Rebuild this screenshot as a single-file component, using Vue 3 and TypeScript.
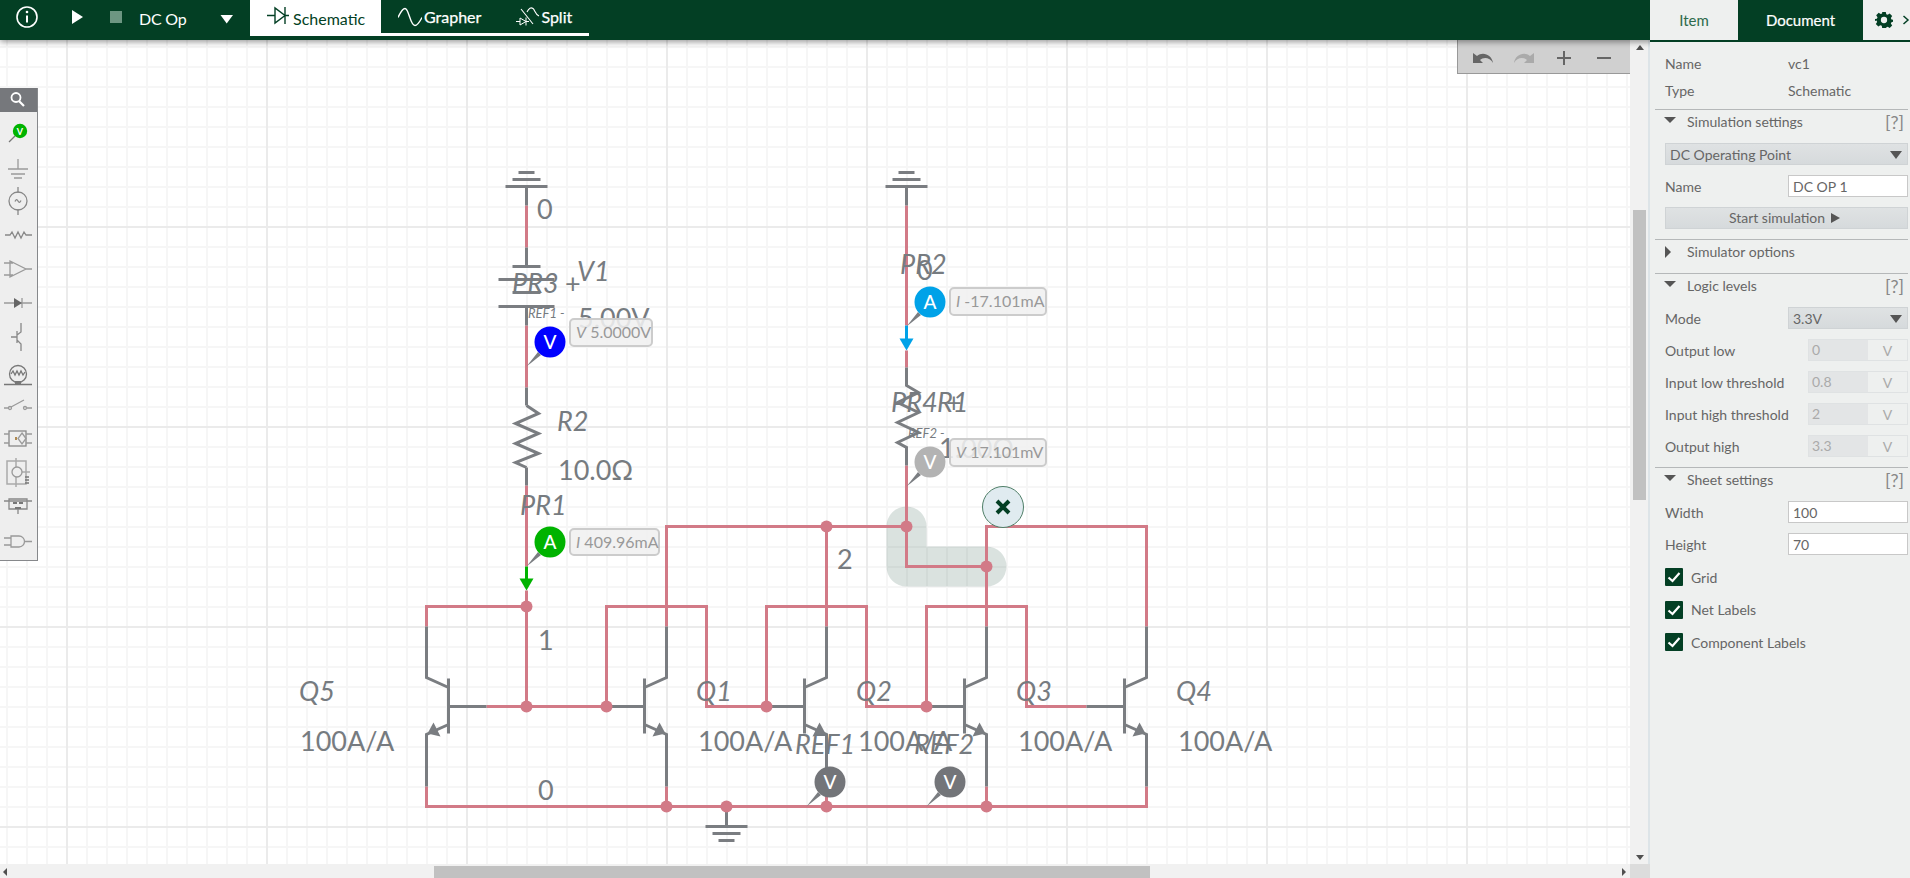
<script setup lang="ts">
const RED = '#d27a87'
const GRAY = '#7a7d81'

const redWires: string[] = [
  'M526 205V247', 'M526 325V387', 'M526 485V566', 'M526 590V706',
  'M906 205V325', 'M906 350V367', 'M906 465V566H986',
  'M906 526H666V626', 'M826 526V626', 'M986 626V526H1146V626',
  'M526 606H426V626', 'M486 706H606', 'M606 706V606H706V706H766',
  'M766 706V606H866V706H926', 'M926 706V606H1026V706H1086',
  'M426 786V806H1146V786', 'M666 786V806', 'M826 786V806', 'M986 786V806'
]
const grayWires: string[] = [
  'M526 186V205', 'M526 247V266', 'M526 306V325', 'M526 387V405', 'M526 467V485',
  'M505 186H547', 'M512 179H540', 'M518 172H534',
  'M512 266H540', 'M498 279H554', 'M512 292H540', 'M498 306H554',
  'M526 405L538 413L515 423L538 433L515 443L538 453L515 462L526 467',
  'M906 186V205', 'M885 186H927', 'M892 179H920', 'M898 172H914',
  'M906 367V385L918 392L897 402L918 412L897 422L918 432L897 442L906 447V465',
  'M726 806V826', 'M705 826H747', 'M712 833H740', 'M718 840H734'
]
const junctions: [number, number][] = [
  [526, 606], [526, 706], [606, 706], [766, 706], [926, 706], [826, 526], [906, 526],
  [986, 566], [666, 806], [726, 806], [826, 806], [986, 806]
]

interface Transistor { cx: number; bx: number; from: number }
const transistors: Transistor[] = [
  { cx: 426, bx: 448, from: 486 },
  { cx: 666, bx: 644, from: 606 },
  { cx: 826, bx: 804, from: 766 },
  { cx: 986, bx: 964, from: 926 },
  { cx: 1146, bx: 1124, from: 1086 }
]
function transistorPath(t: Transistor): string {
  return `M${t.cx} 626V677L${t.bx} 687M${t.bx} 678V733M${t.from} 706H${t.bx}M${t.bx} 724L${t.cx} 734V786`
}
function arrowPoints(t: Transistor): string {
  const s = t.cx > t.bx ? 1 : -1
  return `${t.bx + 8 * s},736 ${t.bx + 15 * s},722 ${t.bx + 21 * s},733`
}

interface Label { x: number; y: number; t: string; i?: boolean }
const labels: Label[] = [
  { x: 537, y: 219, t: '0' },
  { x: 577, y: 281, t: 'V1', i: true },
  { x: 512, y: 293, t: 'PR3', i: true },
  { x: 565, y: 293, t: '+' },
  { x: 578, y: 328, t: '5.00V' },
  { x: 557, y: 431, t: 'R2', i: true },
  { x: 558, y: 480, t: '10.0Ω' },
  { x: 520, y: 515, t: 'PR1', i: true },
  { x: 538, y: 650, t: '1' },
  { x: 538, y: 800, t: '0' },
  { x: 837, y: 569, t: '2' },
  { x: 900, y: 274, t: 'PR2', i: true },
  { x: 917, y: 280, t: '0' },
  { x: 891, y: 412, t: 'PR4', i: true },
  { x: 946, y: 412, t: '+' },
  { x: 937, y: 412, t: 'R1', i: true },
  { x: 939, y: 458, t: '1.00Ω' },
  { x: 299, y: 701, t: 'Q5', i: true },
  { x: 300, y: 751, t: '100A/A' },
  { x: 696, y: 701, t: 'Q1', i: true },
  { x: 698, y: 751, t: '100A/A' },
  { x: 856, y: 701, t: 'Q2', i: true },
  { x: 858, y: 751, t: '100A/A' },
  { x: 1016, y: 701, t: 'Q3', i: true },
  { x: 1018, y: 751, t: '100A/A' },
  { x: 1176, y: 701, t: 'Q4', i: true },
  { x: 1178, y: 751, t: '100A/A' },
  { x: 795, y: 754, t: 'REF1', i: true },
  { x: 914, y: 754, t: 'REF2', i: true }
]

interface Probe { x: number; y: number; c: string; t: string }
const probes: Probe[] = [
  { x: 550, y: 342, c: '#0000ff', t: 'V' },
  { x: 550, y: 542, c: '#00b300', t: 'A' },
  { x: 930, y: 302, c: '#00a2e8', t: 'A' },
  { x: 930, y: 462, c: '#b3b3b3', t: 'V' },
  { x: 830, y: 782, c: '#737579', t: 'V' },
  { x: 950, y: 782, c: '#737579', t: 'V' }
]
interface Tip { x: number; y: number; w: number; h: number; k: string; v: string }
const tips: Tip[] = [
  { x: 570, y: 319, w: 82, h: 27, k: 'V', v: '5.0000V' },
  { x: 570, y: 529, w: 89, h: 26, k: 'I', v: '409.96mA' },
  { x: 950, y: 288, w: 96, h: 27, k: 'I', v: '-17.101mA' },
  { x: 950, y: 439, w: 96, h: 27, k: 'V', v: '17.101mV' }
]
const logicRows = [
  { label: 'Output low', value: '0' },
  { label: 'Input low threshold', value: '0.8' },
  { label: 'Input high threshold', value: '2' },
  { label: 'Output high', value: '3.3' }
]
const checks = ['Grid', 'Net Labels', 'Component Labels']
</script>

<template>
  <div class="app">
    <header class="topbar">
      <svg class="tb-icon" width="250" height="40" viewBox="0 0 250 40">
        <circle cx="27" cy="17" r="10" fill="none" stroke="#fff" stroke-width="1.6" />
        <circle cx="27" cy="12" r="1.3" fill="#fff" />
        <path d="M27 15.5V22.5" stroke="#fff" stroke-width="2" />
        <path d="M72 10L83 17L72 24Z" fill="#fff" />
        <rect x="110" y="11" width="12" height="12" fill="#6d9682" />
        <path d="M220.5 15H233L226.7 23.5Z" fill="#fff" />
      </svg>
      <span class="sim-mode">DC Op</span>
      <nav class="tabs">
        <div class="tab active">
          <svg class="raise" width="24" height="20" viewBox="0 0 24 20">
            <path d="M0 9.5H8M8 2V17L18 9.5ZM18 1V18M18 9.5H22" fill="none" stroke="#033f24" stroke-width="1.4" />
          </svg>
          <span>Schematic</span>
        </div>
        <div class="rest">
          <div class="tab">
            <svg width="24" height="20" viewBox="0 0 24 20">
              <path d="M0 10.5C3 4 5 1.500 7 1.500C11 1.500 12 18.500 17 18.500C20 18.500 22 14 24 10.500" fill="none" stroke="#fff" stroke-width="1.4" />
            </svg>
            <span>Grapher</span>
          </div>
          <div class="tab split">
            <svg width="25" height="22" viewBox="0 0 25 22">
              <path d="M1 15.500H5M5 12V19L11 15.500ZM11 11.500V19.500M11 15.500H14" fill="none" stroke="#fff" stroke-width="1" />
              <path d="M6 3L18 18" fill="none" stroke="#fff" stroke-width="1.100" />
              <path d="M12 6C14 2 16 1 18 2.500S20 8 24 10" fill="none" stroke="#fff" stroke-width="1.100" />
            </svg>
            <span>Split</span>
          </div>
        </div>
      </nav>
    </header>

    <div class="body">
      <main class="canvas">
        <svg class="circuit" width="1632" height="824" viewBox="0 40 1632 824">
          <g transform="translate(.5 .5)">
            <path d="M906 526V566H986" fill="none" stroke="#043f25" stroke-opacity=".15" stroke-width="40" stroke-linecap="round" stroke-linejoin="round" />
            <g fill="none" stroke-width="3">
              <path v-for="d in redWires" :key="d" :d="d" :stroke="RED" />
              <path v-for="d in grayWires" :key="d" :d="d" :stroke="GRAY" />
              <path v-for="t in transistors" :key="t.cx" :d="transistorPath(t)" :stroke="GRAY" />
              <path d="M526 566V580" stroke="#00b300" />
              <path d="M906 325V339" stroke="#00a2e8" />
            </g>
            <polygon v-for="t in transistors" :key="t.bx" :points="arrowPoints(t)" :fill="GRAY" />
            <path d="M519 578H533L526 590Z" fill="#00b300" />
            <path d="M899 338H913L906 350Z" fill="#00a2e8" />
            <circle v-for="j in junctions" :key="j.join()" :cx="j[0]" :cy="j[1]" r="6" :fill="RED" />
          </g>
          <g class="lbl">
            <text v-for="l in labels" :key="l.t + l.x + l.y" :x="l.x" :y="l.y" :class="{ it: l.i }">{{ l.t }}</text>
            <text class="small" x="528" y="318">REF1 -</text>
            <text class="small" x="908" y="438">REF2 -</text>
          </g>
          <g v-for="p in probes" :key="p.x + '-' + p.y">
            <path :d="`M${p.x - 23.5} ${p.y + 24.5}L${p.x - 12} ${p.y + 10}L${p.x - 9} ${p.y + 13}Z`" :fill="GRAY" />
            <circle :cx="p.x" :cy="p.y" r="15.5" :fill="p.c" />
            <text class="probe" :x="p.x" :y="p.y + 6.5">{{ p.t }}</text>
          </g>
          <g v-for="t in tips" :key="t.x + '-' + t.y">
            <rect :x="t.x" :y="t.y" :width="t.w" :height="t.h" rx="4" fill="#f0f0f0" fill-opacity=".88" stroke="#cccccc" stroke-width="2" />
            <text class="tip" :x="t.x + 6" :y="t.y + 19"><tspan font-style="italic">{{ t.k }}</tspan> {{ t.v }}</text>
          </g>
          <circle cx="1003" cy="507" r="20.5" fill="#e0ebf0" stroke="#4f7f68" />
          <path d="M997 501L1009 513M1009 501L997 513" stroke="#033f24" stroke-width="4" />
        </svg>

        <aside class="palette">
          <div class="search">
            <svg width="37" height="24" viewBox="0 0 37 24">
              <circle cx="16" cy="9.5" r="4.5" fill="none" stroke="#fff" stroke-width="1.8" />
              <path d="M19 13L24 18" stroke="#fff" stroke-width="2.2" />
            </svg>
          </div>
          <svg width="37" height="448" viewBox="0 112 37 448">
            <path d="M9 142L15 136" stroke="#777" stroke-width="1.3" />
            <circle cx="20" cy="131" r="7.2" fill="#00b300" />
            <text class="pv" x="20" y="134.5">V</text>
            <g fill="none" stroke="#9a9a9a" stroke-width="1.3">
              <path d="M18 159V169M8 169H28M11 174H25M14 178H22" />
              <circle cx="18" cy="201" r="9" stroke="#888" />
              <path d="M18 187V193M18 209V215M15 201.5Q16.5 198 18 201T21 200.5" stroke="#888" />
              <path d="M5 235H10L12 232L15 238L18 232L21 238L24 232L26 235H32" stroke="#888" />
              <path d="M10 261V277L26 269ZM26 269H32M4 263H13M4 275H13" />
              <path d="M4 303H32M22 298V308" />
              <path d="M21 323V332L17 335M17 331V343M11 337H17M17 340L21 344V351" stroke="#888" />
              <circle cx="18" cy="374" r="8.5" stroke="#777" />
              <path d="M4 384.5H32M11 374L13 371L15 375L17 371L19 375L21 371L23 375L25 372" stroke="#777" />
              <path d="M4 408H9M11 407L24 400M27 408H32" />
              <circle cx="10" cy="408" r="1.5" />
              <circle cx="25" cy="408" r="1.5" />
              <rect x="9" y="431" width="17" height="15" stroke="#888" />
              <path d="M4 434H9M26 434H32M4 443H9M26 443H32M22 433L26 438.5L22 444L18 438.5Z" />
              <path d="M7 461H26V484H7ZM16 458V467M16 477V487M22 472H30" stroke="#aaa" stroke-width="1.5" />
              <circle cx="17" cy="472" r="5" stroke="#999" />
              <path d="M25 477H29M25 480H29M25 483H29" stroke="#777" />
              <path d="M4 501H32M9 499H27V509H9ZM18 509V514" stroke="#888" />
              <path d="M11 536H19A5.5 5.5 0 0 1 19 547H11ZM4 538H11M4 545H11M25 541.5H32" stroke="#999" />
            </g>
            <path d="M14 298V308L22 303Z" fill="#666" />
            <path d="M15 381H21V384H15ZM15 507H21V509H15ZM13 502H17V504H13ZM19 502H23V504H19Z" fill="#777" />
            <rect x="15" y="437" width="2" height="3" fill="#b08a50" />
          </svg>
        </aside>

        <div class="tools">
          <svg width="174" height="34" viewBox="0 0 174 34">
            <path d="M16 13V23H26L23 20C26 17 33 17 36 23C35 15 26 11 20 16Z" fill="#666" />
            <path d="M77 13V23H67L70 20C67 17 60 17 57 23C58 15 67 11 73 16Z" fill="#aaa" />
            <path d="M100 18H114M107 11V25" stroke="#666" stroke-width="2" />
            <path d="M140 18H154" stroke="#666" stroke-width="2" />
          </svg>
        </div>

        <div class="vscroll">
          <span class="arrow up"></span>
          <span class="vthumb"></span>
          <span class="arrow down"></span>
        </div>
        <div class="hscroll">
          <span class="harrow left"></span>
          <span class="hthumb"></span>
          <span class="harrow right"></span>
        </div>
      </main>

      <aside class="panel">
        <div class="ptabs">
          <div class="ptab item">Item</div>
          <div class="ptab doc">Document</div>
          <div class="ptab gear">
            <svg width="18" height="18" viewBox="0 0 20 20">
              <path fill="#033f24" fill-rule="evenodd" d="M8 1h4l.5 2.6 1.6.7 2.2-1.500 2.800 2.800-1.500 2.200.7 1.600 2.100.500v2l-2.100.5-.7 1.600 1.500 2.200-2.800 2.800-2.200-1.500-1.600.7L12 19H8l-.5-2.600-1.600-.7-2.200 1.500-2.800-2.800 1.500-2.200-.7-1.600L0 11V9l2.100-.5.7-1.600-1.500-2.200 2.800-2.800 2.200 1.500 1.600-.7ZM10 6.500a3.500 3.500 0 1 0 0 7 3.500 3.500 0 0 0 0-7Z" />
            </svg>
            <svg class="chev" width="8" height="12" viewBox="0 0 8 12">
              <path d="M1.500 2L6 6L1.500 10" fill="none" stroke="#033f24" stroke-width="1.500" />
            </svg>
          </div>
        </div>

        <div class="pbody">
          <div class="info"><span class="lab">Name</span><span>vc1</span></div>
          <div class="info"><span class="lab">Type</span><span>Schematic</span></div>

          <section class="sec first">
            <div class="sec-h"><i class="tri-d"></i><span>Simulation settings</span><b>[?]</b></div>
            <div class="select full">DC Operating Point<i class="sel-a"></i></div>
            <div class="row"><span class="lab">Name</span><div class="input">DC OP 1</div></div>
            <div class="btn">Start simulation<i class="play"></i></div>
          </section>

          <section class="sec options">
            <div class="sec-h"><i class="tri-r"></i><span>Simulator options</span></div>
          </section>

          <section class="sec logic">
            <div class="sec-h"><i class="tri-d"></i><span>Logic levels</span><b>[?]</b></div>
            <div class="row lead"><span class="lab">Mode</span><div class="select half">3.3V<i class="sel-a"></i></div></div>
            <div v-for="r in logicRows" :key="r.label" class="row">
              <span class="lab">{{ r.label }}</span>
              <div class="unit"><span class="uval">{{ r.value }}</span><span class="uv">V</span></div>
            </div>
          </section>

          <section class="sec sheet">
            <div class="sec-h"><i class="tri-d"></i><span>Sheet settings</span><b>[?]</b></div>
            <div class="row lead"><span class="lab">Width</span><div class="input">100</div></div>
            <div class="row"><span class="lab">Height</span><div class="input">70</div></div>
            <label v-for="(c, i) in checks" :key="c" class="check" :class="{ firstcheck: i === 0 }">
              <span class="box">
                <svg width="18" height="18" viewBox="0 0 18 18"><path d="M3.500 9.500L7.500 13L14.500 5" fill="none" stroke="#fff" stroke-width="2.200" /></svg>
              </span>
              {{ c }}
            </label>
          </section>
        </div>
      </aside>
    </div>
  </div>
</template>

<style>
html, body { margin: 0; height: 100%; overflow: hidden; }
</style>

<style scoped>
.app {
  width: 1910px;
  height: 878px;
  display: flex;
  flex-direction: column;
  font-family: Lato, "Noto Sans", sans-serif;
  overflow: hidden;
  background: #fff;
}
.topbar {
  position: relative;
  z-index: 3;
  height: 40px;
  flex: none;
  display: flex;
  background: #033f24;
  box-shadow: 0 2px 6px rgba(0, 0, 0, .4);
  color: #fff;
}
.tb-icon { flex: none; }
.sim-mode {
  position: absolute;
  left: 139px;
  top: 9px;
  font-size: 16px;
  line-height: 19px;
  letter-spacing: -.2px;
}
.tabs { display: flex; height: 36px; }
.tab {
  display: flex;
  align-items: center;
  font-size: 16px;
  gap: 2px;
  height: 33px;
}
.rest .tab span { -webkit-text-stroke: .25px #fff; }
.raise { margin-top: -4px; }
.tab.active {
  width: 131px;
  height: 36px;
  box-sizing: border-box;
  padding-left: 17px;
  background: #fff;
  color: #033f24;
}
.rest {
  display: flex;
  width: 208px;
  padding-left: 17px;
  box-sizing: border-box;
  height: 36px;
  border-bottom: 3px solid #fff;
}
.tab.split { margin-left: 34px; gap: 1px; }

.body { flex: 1; display: flex; min-height: 0; }
.canvas {
  position: relative;
  width: 1650px;
  flex: none;
  overflow: hidden;
  background-color: #fff;
  background-image:
    linear-gradient(90deg, #ebebeb 2px, transparent 2px),
    linear-gradient(#ebebeb 2px, transparent 2px),
    linear-gradient(90deg, #f6f6f6 2px, transparent 2px),
    linear-gradient(#f6f6f6 2px, transparent 2px);
  background-size: 200px 200px, 200px 200px, 20px 20px, 20px 20px;
  background-position: 66px 186px, 66px 186px, 6px 6px, 6px 6px;
}
.circuit { position: absolute; left: 0; top: 0; }
.lbl text {
  font-size: 27px;
  fill: #767b80;
}
.lbl text.it { font-style: italic; }
.lbl text.small { font-size: 13px; font-style: italic; }
.probe {
  font-size: 19px;
  font-weight: 500;
  fill: #fff;
  text-anchor: middle;
}
.tip { font-size: 16px; fill: #999; }
.pv { font-size: 9px; font-weight: 700; fill: #fff; text-anchor: middle; }

.palette {
  position: absolute;
  left: 0;
  top: 48px;
  width: 37px;
  height: 472px;
  background: #eeeeee;
  border-right: 1px solid #86888b;
  border-bottom: 1px solid #86888b;
}
.search { height: 24px; background: #76787c; }
.search svg, .palette svg { display: block; }
.tools {
  position: absolute;
  left: 1457px;
  top: 0;
  width: 172px;
  height: 33px;
  background: #d0d0d0;
  border: 1px solid #999;
  border-top: 0;
}
.tools svg { display: block; margin-left: -1px; }
.vscroll {
  position: absolute;
  right: 0;
  top: 0;
  bottom: 14px;
  width: 20px;
  box-sizing: border-box;
  background: #f1f1f1;
  border-right: 2px solid #dde4e8;
}
.vthumb {
  position: absolute;
  left: 3px;
  top: 170px;
  width: 13px;
  height: 290px;
  background: #c1c1c1;
}
.arrow { position: absolute; left: 6px; width: 0; height: 0; border: 4px solid transparent; }
.arrow.up { top: 5px; border-bottom: 5px solid #505050; border-top: 0; }
.arrow.down { bottom: 4px; border-top: 5px solid #505050; border-bottom: 0; }
.hscroll {
  position: absolute;
  left: 0;
  bottom: 0;
  width: 1650px;
  height: 14px;
  background: #f1f1f1;
  box-shadow: inset -20px 0 0 #dcdcdc;
}
.hthumb {
  position: absolute;
  left: 434px;
  top: 2px;
  width: 716px;
  height: 12px;
  background: #c1c1c1;
}
.harrow { position: absolute; top: 4px; width: 0; height: 0; border: 4px solid transparent; }
.harrow.left { left: 3px; border-right: 4px solid #505050; border-left: 0; }
.harrow.right { left: 1622px; border-left: 4px solid #505050; border-right: 0; }

.panel {
  position: relative;
  z-index: 4;
  margin-top: -40px;
  width: 260px;
  flex: none;
  background: #eef0ef;
  font-size: 14px;
  color: #666;
}
.ptabs {
  display: flex;
  height: 40px;
  border-bottom: 2px solid #033f24;
}
.ptab { display: flex; align-items: center; justify-content: center; font-size: 15px; }
.ptab.item { width: 88px; color: #2d6a4c; }
.ptab.doc { width: 125px; background: #033f24; color: #fff; -webkit-text-stroke: .2px #fff; }
.ptab.gear { width: 47px; justify-content: flex-start; padding-left: 12px; box-sizing: border-box; gap: 9px; }
.chev { flex: none; }
.pbody { padding: 8px 2px 0 15px; }
.info { display: flex; height: 27px; align-items: center; }
.lab { width: 123px; flex: none; white-space: nowrap; }
.sec { margin-left: -10px; border-top: 1px solid #b5b8b9; padding-left: 10px; }
.sec.first { margin-top: 5px; height: 129px; }
.sec.options { height: 33px; }
.sec.logic { height: 193px; }
.sec-h {
  height: 24px;
  box-sizing: border-box;
  padding-bottom: 1px;
  display: flex;
  align-items: center;
  position: relative;
  padding-left: 22px;
}
.sec-h b { position: absolute; right: 4px; top: 1px; font-weight: 400; font-size: 18px; color: #888; }
.tri-d {
  position: absolute; left: -1px; top: 7px;
  width: 0; height: 0;
  border-left: 6px solid transparent; border-right: 6px solid transparent;
  border-top: 6px solid #555;
}
.tri-r {
  position: absolute; left: 0; top: 6px;
  width: 0; height: 0;
  border-top: 6px solid transparent; border-bottom: 6px solid transparent;
  border-left: 6px solid #555;
}
.select, .btn {
  position: relative;
  box-sizing: border-box;
  height: 22px;
  border: 1px solid #cfd3d5;
  background: linear-gradient(#dfe2e3, #d6dadc);
  display: flex;
  align-items: center;
  padding-left: 4px;
}
.select.full { margin-top: 9px; }
.select.half { width: 120px; }
.sel-a {
  position: absolute; right: 5px; top: 7px;
  width: 0; height: 0;
  border-left: 6px solid transparent; border-right: 6px solid transparent;
  border-top: 8px solid #555;
}
.row { display: flex; align-items: center; height: 22px; margin-top: 10px; }
.row.lead { margin-top: 9px; }
.input {
  box-sizing: border-box;
  width: 120px;
  height: 22px;
  background: #fff;
  border: 1px solid #c8c8c8;
  padding-left: 4px;
  line-height: 21px;
}
.btn { margin-top: 10px; justify-content: center; padding: 0 4px 1px 0; gap: 6px; }
.play {
  width: 0; height: 0;
  border-top: 5.5px solid transparent; border-bottom: 5.5px solid transparent;
  border-left: 9px solid #555;
}
.unit {
  margin-left: 20px;
  box-sizing: border-box;
  width: 100px;
  height: 22px;
  display: flex;
  align-items: center;
  border: 1px solid #dfe2e3;
  color: #aaa;
}
.uval { width: 59px; height: 20px; line-height: 20px; padding-left: 3px; background: #e3e5e6; box-sizing: border-box; }
.uv { flex: 1; text-align: center; }
.check { display: flex; align-items: center; height: 18px; margin-top: 14.5px; gap: 8px; }
.check.firstcheck { margin-top: 13px; }
.box { width: 18px; height: 18px; background: #033f24; border-radius: 1px; display: block; }
.box svg { display: block; }
</style>
